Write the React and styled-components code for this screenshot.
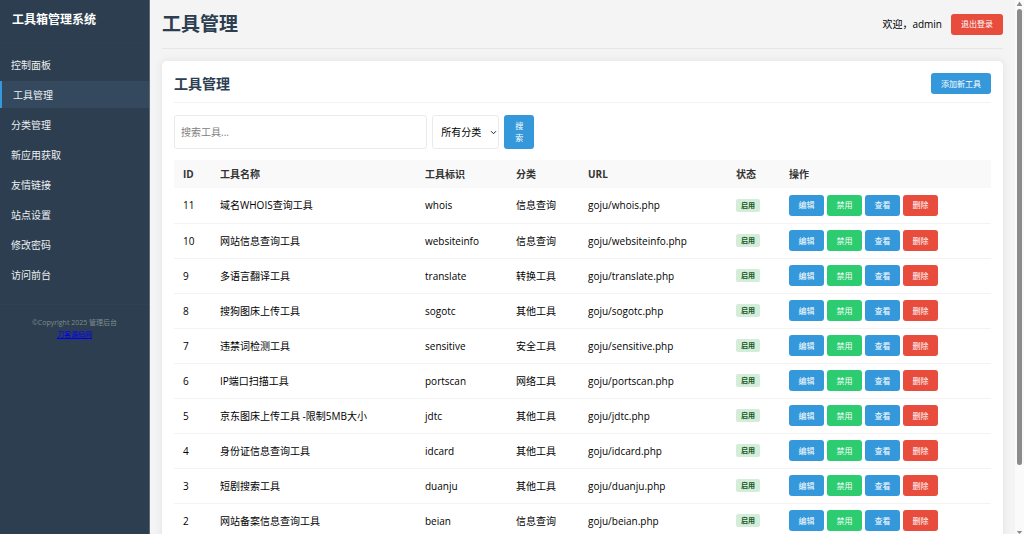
import React from "react";
import styled, { createGlobalStyle, css } from "styled-components";

const GlobalStyle = createGlobalStyle`
  *, *::before, *::after { box-sizing: border-box; }
  body {
    margin: 0;
    background: #f4f4f4;
    color: #000;
    font-family: "Open Sans", "Noto Sans CJK SC", sans-serif;
    font-size: 10px;
    line-height: 16px;
  }
  h1, h2, ul, p { margin: 0; padding: 0; }
  button, input, select { font-family: inherit; }
`;

const Page = styled.div`
  display: flex;
  height: 100vh;
  overflow: hidden;
`;

const Sidebar = styled.aside`
  flex: 0 0 150px;
  background: #2c3e50;
  border-right: 1px solid #5d6b79;
`;

const Brand = styled.div`
  padding: 10px 12px 12px;
  color: #fff;
  font-size: 12px;
  font-weight: 700;
  line-height: 20px;
  border-bottom: 1px solid #2e4052;
`;

const Menu = styled.ul`
  display: flex;
  flex-direction: column;
  gap: 3px;
  padding: 8px 0 16px;
  list-style: none;
`;

const MenuLink = styled.a`
  display: block;
  height: 27px;
  padding-left: 11px;
  line-height: 28px;
  color: #ecf0f1;
  text-decoration: none;
  ${(p) =>
    p.$active &&
    css`
      background: #34495e;
      border-left: 2px solid #3498db;
    `}
`;

const SidebarFooter = styled.footer`
  padding: 12px;
  border-top: 1px solid #2f4153;
  color: #7f8c8d;
  font-size: 7px;
  line-height: 12px;
  text-align: center;
`;

const FooterLink = styled.a`
  color: #0000ee;
`;

const Content = styled.main`
  flex: 1;
  min-width: 0;
  padding: 0 12px 12px;
  overflow-y: auto;
  scrollbar-width: none;
`;

const PageHeader = styled.header`
  display: flex;
  align-items: center;
  justify-content: space-between;
  height: 49px;
  margin-bottom: 12px;
  border-bottom: 1px solid #e6e6e6;
`;

const PageTitle = styled.h1`
  color: #2c3e50;
  font-size: 19px;
  line-height: 28px;
`;

const UserInfo = styled.div`
  display: flex;
  align-items: center;
  gap: 9px;
`;

const tones = {
  primary: "#3498db",
  success: "#2ecc71",
  danger: "#e74c3c",
};

const Button = styled.button`
  height: 21px;
  padding: 0 10px;
  border: 0;
  border-radius: 3px;
  background: ${(p) => tones[p.$tone]};
  color: #fff;
  font-size: 8px;
  line-height: 12px;
`;

const RowButton = styled(Button)`
  min-width: 35px;
  padding: 0 9px;
`;

const SearchButton = styled(Button)`
  width: 30px;
  height: 34px;
`;

const Card = styled.section`
  padding: 12px;
  border-radius: 5px;
  background: #fff;
  box-shadow: 0 0 8px rgba(0, 0, 0, 0.08);
`;

const CardHeader = styled.div`
  display: flex;
  align-items: flex-start;
  justify-content: space-between;
  height: 30px;
  margin-bottom: 12px;
  border-bottom: 1px solid #f2f2f2;
`;

const CardTitle = styled.h2`
  color: #2c3e50;
  font-size: 14px;
  line-height: 22px;
`;

const SearchForm = styled.form`
  display: flex;
  gap: 5px;
  margin-bottom: 11px;
`;

const SearchInput = styled.input`
  width: 31%;
  height: 34px;
  padding: 0 6px;
  border: 1px solid #ebebeb;
  border-radius: 3px;
  background: #fff;
  font-size: 10px;
  &::placeholder { color: #808080; }
`;

const SelectBox = styled.div`
  position: relative;
  width: 67px;
`;

const CategorySelect = styled.select`
  width: 100%;
  height: 34px;
  padding: 0 8px;
  border: 1px solid #ebebeb;
  border-radius: 3px;
  background: #fff;
  color: #000;
  font-size: 10px;
  appearance: none;
`;

const Chevron = styled.svg`
  position: absolute;
  top: 14px;
  right: 2px;
  width: 7px;
  height: 7px;
  pointer-events: none;
`;

const ToolTable = styled.table`
  width: 100%;
  border-collapse: collapse;
  table-layout: fixed;
`;

const Column = styled.col`
  width: ${(p) => p.$width};
`;

const HeadCell = styled.th`
  height: 28px;
  padding: 0 9px;
  background: #f9f9f9;
  color: #333;
  text-align: left;
`;

const Row = styled.tr`
  border-bottom: 1px solid #f3f3f3;
`;

const Cell = styled.td`
  height: 35px;
  padding: 0 9px;
  white-space: nowrap;
`;

const Status = styled.span`
  display: block;
  width: 24px;
  height: 13px;
  border-radius: 2px;
  background: #d4edda;
  color: #155724;
  font-size: 7px;
  font-weight: 700;
  line-height: 13px;
  text-align: center;
`;

const Actions = styled.div`
  display: flex;
  gap: 3px;
`;

const Scrollbar = styled.div`
  display: flex;
  flex: 0 0 9px;
  flex-direction: column;
  align-items: center;
  justify-content: space-between;
  background: #fafafa;
`;

const ScrollTrack = styled.div`
  flex: 1;
  width: 5px;
  margin: 2px 0 0;
`;

const ScrollThumb = styled.div`
  height: 88%;
  border-radius: 3px;
  background: #8b8b8b;
`;

const ScrollArrow = styled.svg`
  width: 7px;
  height: 7px;
  fill: #8b8b8b;
`;

const menu = [
  "控制面板",
  "工具管理",
  "分类管理",
  "新应用获取",
  "友情链接",
  "站点设置",
  "修改密码",
  "访问前台",
];

const columns = [
  ["ID", "37px"],
  ["工具名称", "205px"],
  ["工具标识", "91px"],
  ["分类", "72px"],
  ["URL", "148px"],
  ["状态", "53px"],
  ["操作", "auto"],
];

const tools = [
  [11, "域名WHOIS查询工具", "whois", "信息查询"],
  [10, "网站信息查询工具", "websiteinfo", "信息查询"],
  [9, "多语言翻译工具", "translate", "转换工具"],
  [8, "搜狗图床上传工具", "sogotc", "其他工具"],
  [7, "违禁词检测工具", "sensitive", "安全工具"],
  [6, "IP端口扫描工具", "portscan", "网络工具"],
  [5, "京东图床上传工具 -限制5MB大小", "jdtc", "其他工具"],
  [4, "身份证信息查询工具", "idcard", "其他工具"],
  [3, "短剧搜索工具", "duanju", "其他工具"],
  [2, "网站备案信息查询工具", "beian", "信息查询"],
];

export default function App() {
  return (
    <>
      <GlobalStyle />
      <Page>
        <Sidebar>
          <Brand>工具箱管理系统</Brand>
          <nav>
            <Menu>
              {menu.map((label) => (
                <li key={label}>
                  <MenuLink href="#" $active={label === "工具管理"}>
                    {label}
                  </MenuLink>
                </li>
              ))}
            </Menu>
          </nav>
          <SidebarFooter>
            <p>©Copyright 2025 管理后台</p>
            <FooterLink href="#">刀客源码网</FooterLink>
          </SidebarFooter>
        </Sidebar>
        <Content>
          <PageHeader>
            <PageTitle>工具管理</PageTitle>
            <UserInfo>
              <span>欢迎，admin</span>
              <Button type="button" $tone="danger">退出登录</Button>
            </UserInfo>
          </PageHeader>
          <Card>
            <CardHeader>
              <CardTitle>工具管理</CardTitle>
              <Button type="button" $tone="primary">添加新工具</Button>
            </CardHeader>
            <SearchForm onSubmit={(e) => e.preventDefault()}>
              <SearchInput type="text" placeholder="搜索工具..." aria-label="搜索工具" />
              <SelectBox>
                <CategorySelect aria-label="所有分类">
                  <option>所有分类</option>
                </CategorySelect>
                <Chevron viewBox="0 0 7 7" fill="none" stroke="#222" strokeWidth="1" aria-hidden="true">
                  <path d="M1 2.2 3.5 4.7 6 2.2" />
                </Chevron>
              </SelectBox>
              <SearchButton type="submit" $tone="primary">搜索</SearchButton>
            </SearchForm>
            <ToolTable>
              <colgroup>
                {columns.map(([name, width]) => (
                  <Column key={name} $width={width} />
                ))}
              </colgroup>
              <thead>
                <tr>
                  {columns.map(([name]) => (
                    <HeadCell key={name} scope="col">{name}</HeadCell>
                  ))}
                </tr>
              </thead>
              <tbody>
                {tools.map(([id, name, slug, category]) => (
                  <Row key={id}>
                    <Cell>{id}</Cell>
                    <Cell>{name}</Cell>
                    <Cell>{slug}</Cell>
                    <Cell>{category}</Cell>
                    <Cell>goju/{slug}.php</Cell>
                    <Cell><Status>启用</Status></Cell>
                    <Cell>
                      <Actions>
                        <RowButton type="button" $tone="primary">编辑</RowButton>
                        <RowButton type="button" $tone="success">禁用</RowButton>
                        <RowButton type="button" $tone="primary">查看</RowButton>
                        <RowButton type="button" $tone="danger">删除</RowButton>
                      </Actions>
                    </Cell>
                  </Row>
                ))}
              </tbody>
            </ToolTable>
          </Card>
        </Content>
        <Scrollbar aria-hidden="true">
          <ScrollArrow viewBox="0 0 7 7"><path d="M3.5 1.5 6.3 6H.7Z" /></ScrollArrow>
          <ScrollTrack><ScrollThumb /></ScrollTrack>
          <ScrollArrow viewBox="0 0 7 7"><path d="M.7 4h5.6L3.5 7Z" /></ScrollArrow>
        </Scrollbar>
      </Page>
    </>
  );
}
